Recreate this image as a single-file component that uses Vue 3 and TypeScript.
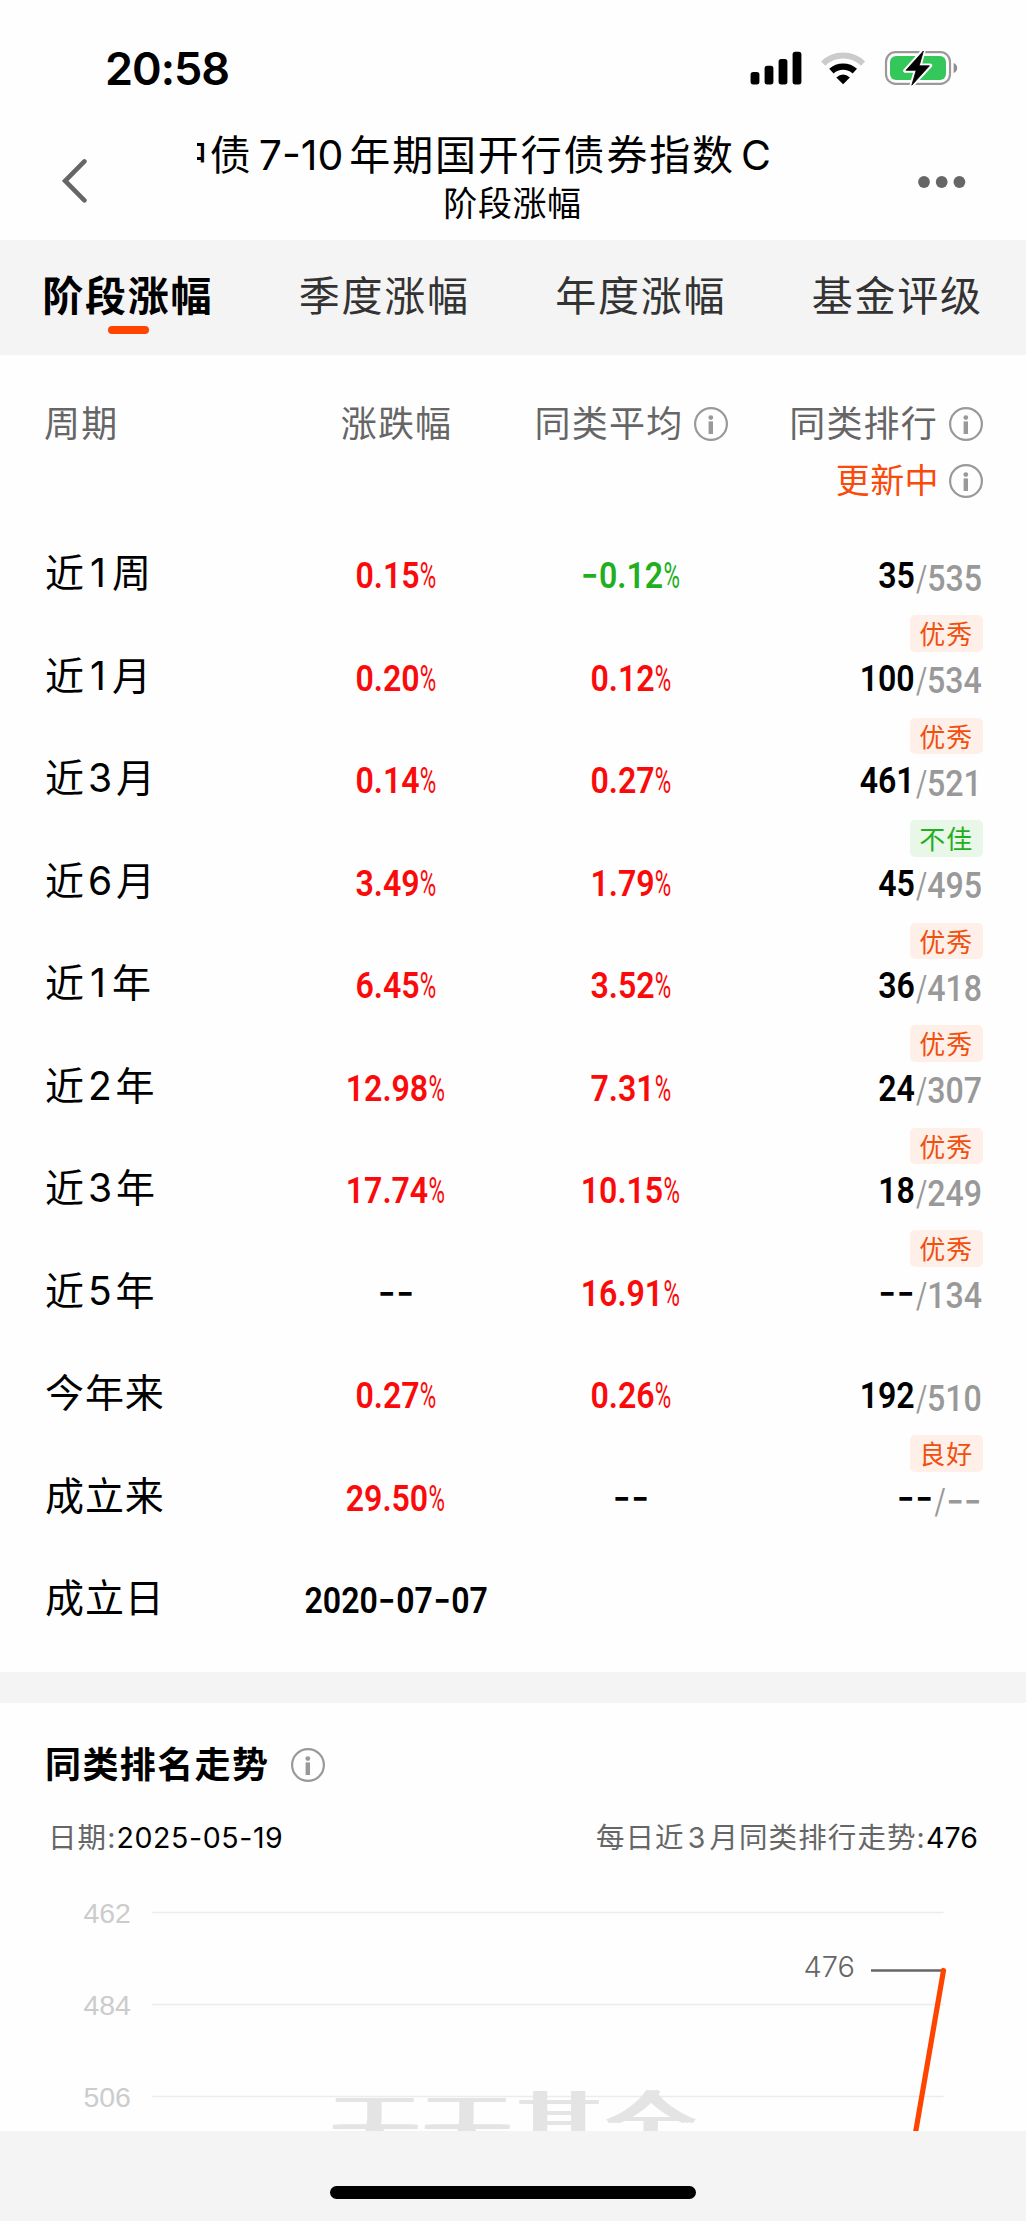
<script setup lang="ts">
import { h, type FunctionalComponent } from 'vue'

type Tone = 'up' | 'down' | 'flat'

interface Figure {
  text: string
  tone: Tone
}

interface Period {
  label: string
  change: Figure
  average?: Figure
  rank?: string
  total?: string
  badge?: string
  badgeTone?: 'good' | 'bad'
}

interface Run {
  kind: 'digits' | 'dash' | 'pct'
  text: string
}

const fig = (text: string): Figure => {
  if (text.includes('--') || !text.endsWith('%')) return { text, tone: 'flat' }
  return { text, tone: text.startsWith('-') ? 'down' : 'up' }
}

// Splits a figure into runs so that dashes and percent signs get their own proportions.
const runs = (text: string): Run[] =>
  (text.match(/-|%|[^-%]+/g) ?? []).map((part) => ({
    kind: part === '-' ? 'dash' : part === '%' ? 'pct' : 'digits',
    text: part,
  }))

// Splits a label at its Latin digits, which stand slightly apart from the Han characters.
const pieces = (text: string) =>
  (text.match(/\d+|\D+/g) ?? []).map((part) => ({ text: part, latin: /\d/.test(part) }))

const tabs = ['阶段涨幅', '季度涨幅', '年度涨幅', '基金评级']
const activeTab = '阶段涨幅'

const periods: Period[] = [
  { label: '近1周', change: fig('0.15%'), average: fig('-0.12%'), rank: '35', total: '535', badge: '优秀', badgeTone: 'good' },
  { label: '近1月', change: fig('0.20%'), average: fig('0.12%'), rank: '100', total: '534', badge: '优秀', badgeTone: 'good' },
  { label: '近3月', change: fig('0.14%'), average: fig('0.27%'), rank: '461', total: '521', badge: '不佳', badgeTone: 'bad' },
  { label: '近6月', change: fig('3.49%'), average: fig('1.79%'), rank: '45', total: '495', badge: '优秀', badgeTone: 'good' },
  { label: '近1年', change: fig('6.45%'), average: fig('3.52%'), rank: '36', total: '418', badge: '优秀', badgeTone: 'good' },
  { label: '近2年', change: fig('12.98%'), average: fig('7.31%'), rank: '24', total: '307', badge: '优秀', badgeTone: 'good' },
  { label: '近3年', change: fig('17.74%'), average: fig('10.15%'), rank: '18', total: '249', badge: '优秀', badgeTone: 'good' },
  { label: '近5年', change: fig('--'), average: fig('16.91%'), rank: '--', total: '134' },
  { label: '今年来', change: fig('0.27%'), average: fig('0.26%'), rank: '192', total: '510', badge: '良好', badgeTone: 'good' },
  { label: '成立来', change: fig('29.50%'), average: fig('--'), rank: '--', total: '--' },
  { label: '成立日', change: fig('2020-07-07') },
]

const gridLines = [
  { label: '462', y: 42.5 },
  { label: '484', y: 134.5 },
  { label: '506', y: 226.5 },
]

const InfoIcon: FunctionalComponent = () =>
  h('svg', { width: 34, height: 34, viewBox: '0 0 34 34', fill: '#999' }, [
    h('circle', { cx: 17, cy: 17, r: 15.9, fill: 'none', stroke: '#999', 'stroke-width': 2.2 }),
    h('circle', { cx: 16.8, cy: 10.6, r: 2.4 }),
    h('rect', { x: 14.6, y: 14.4, width: 4.4, height: 12.6 }),
  ])
</script>

<template>
  <main class="screen">
    <header class="status">
      <span class="clock">20:58</span>
      <svg class="status-icons" width="210" height="40" viewBox="0 0 210 40">
        <g fill="#000">
          <rect x="0.6" y="24" width="8.8" height="12.4" rx="2.6" />
          <rect x="14.6" y="17.8" width="8.8" height="18.6" rx="2.6" />
          <rect x="28.6" y="11" width="8.8" height="25.4" rx="2.6" />
          <rect x="42.6" y="3.8" width="8.8" height="32.6" rx="2.6" />
        </g>
        <path d="M73.2 15.6 A28.5 28.5 0 0 1 113 15.6" fill="none" stroke="#cbcbcb" stroke-width="6" />
        <path d="M81.4 23.2 A17.2 17.2 0 0 1 104.8 23.2" fill="none" stroke="#000" stroke-width="6.4" />
        <path d="M93.1 36.2 L86.3 29.4 Q93.1 23.4 99.9 29.4 Z" fill="#000" />
        <rect x="136" y="4.2" width="64" height="31.6" rx="9.6" fill="#fff" stroke="#9a9a9a" stroke-width="2.2" />
        <rect x="140" y="8" width="56" height="24" rx="6" fill="#34c759" />
        <path d="M203.6 15 Q207.2 16.4 207.2 20 Q207.2 23.6 203.6 25 Z" fill="#8e8e8e" />
        <path d="M173.4 2.6 L155.4 22.6 L166 22.6 L161.6 37.6 L180 17.6 L169.4 17.6 Z" fill="#000" stroke="#fff" stroke-width="4.4" stroke-linejoin="round" />
        <path d="M173.4 3 L156 22.3 L166.2 22.3 L161.8 37.2 L179.4 17.8 L169.2 17.8 Z" fill="#000" stroke="#000" stroke-width="0.8" stroke-linejoin="round" />
      </svg>
    </header>

    <nav class="navbar">
      <svg class="back" width="26" height="48" viewBox="0 0 26 48">
        <path d="M22.4 4.4 L3.2 23.9 L22.4 43.4" fill="none" stroke="#666" stroke-width="4.6" stroke-linecap="round" stroke-linejoin="miter" />
      </svg>
      <div class="titles">
        <div class="marquee"><span class="fund">中债<span class="wide">7-10</span>年期国开行债券指数<span class="last">C</span></span></div>
        <div class="subtitle">阶段涨幅</div>
      </div>
      <svg class="more" width="50" height="14" viewBox="0 0 50 14" fill="#666">
        <circle cx="7" cy="7" r="5.9" />
        <circle cx="24.7" cy="7" r="5.9" />
        <circle cx="42.4" cy="7" r="5.9" />
      </svg>
    </nav>

    <div class="tabs">
      <div v-for="tab in tabs" :key="tab" class="tab" :class="{ active: tab === activeTab }">
        <span>{{ tab }}</span>
      </div>
    </div>

    <section class="table">
      <div class="head">
        <div class="left">周期</div>
        <div class="center">涨跌幅</div>
        <div class="center with-icon">同类平均<InfoIcon /></div>
        <div class="right">
          <div class="with-icon">同类排行<InfoIcon /></div>
          <div class="with-icon updating">更新中<InfoIcon /></div>
        </div>
      </div>
      <div v-for="row in periods" :key="row.label" class="row">
        <div class="label"><span v-for="(p, i) in pieces(row.label)" :key="i" :class="{ latin: p.latin }">{{ p.text }}</span></div>
        <div class="value" :class="row.change.tone">
          <span class="num"><span v-for="(r, i) in runs(row.change.text)" :key="i" :class="r.kind">{{ r.text }}</span></span>
        </div>
        <div v-if="row.average" class="value" :class="row.average.tone">
          <span class="num"><span v-for="(r, i) in runs(row.average.text)" :key="i" :class="r.kind">{{ r.text }}</span></span>
        </div>
        <div v-if="row.rank && row.total" class="standing">
          <div class="rank"><span class="num"><span v-for="(r, i) in runs(row.rank)" :key="i" :class="r.kind">{{ r.text }}</span><span class="total"><span class="slash">/</span><span v-for="(r, i) in runs(row.total)" :key="i" :class="r.kind">{{ r.text }}</span></span></span></div>
          <span v-if="row.badge" class="badge" :class="row.badgeTone">{{ row.badge }}</span>
        </div>
      </div>
    </section>

    <section class="trend">
      <h2>同类排名走势<InfoIcon /></h2>
      <div class="legend">
        <div>日期:<b class="date">2025-05-19</b></div>
        <div>每日近<span class="latin">3</span>月同类排行走势:<b>476</b></div>
      </div>
      <div class="chart">
        <svg width="1026" height="261" viewBox="0 0 1026 261">
          <g v-for="line in gridLines" :key="line.label">
            <text class="tick" x="83.4" :y="line.y + 10.4">{{ line.label }}</text>
            <line x1="151.7" x2="943.5" :y1="line.y" :y2="line.y" stroke="#ececec" stroke-width="1.4" />
          </g>
          <text class="point" x="803.4" y="107">476</text>
          <line x1="871" x2="943" y1="100.5" y2="100.5" stroke="#666" stroke-width="2.7" />
          <path d="M943.5 100.5 L914.6 268" fill="none" stroke="#ff4400" stroke-width="5.2" stroke-linecap="round" />
        </svg>
        <div class="watermark">天天基金</div>
      </div>
    </section>

    <footer class="home"><div class="bar"></div></footer>
  </main>
</template>

<style>
body {
  margin: 0;
  background: #fff;
}
</style>

<style scoped>
.screen {
  width: 1026px;
  height: 2221px;
  overflow: hidden;
  display: flex;
  flex-direction: column;
  background: #fefefe;
  color: #000;
  font-family: 'Inter', 'Noto Sans CJK SC', sans-serif;
}
.status {
  display: flex;
  justify-content: space-between;
  height: 120px;
  padding: 48px 66px 0 105px;
  box-sizing: border-box;
  flex: none;
}
.clock {
  font-weight: 600;
  font-size: 45px;
  line-height: 42px;
  letter-spacing: -1px;
}
.navbar {
  flex: none;
  height: 120px;
  display: flex;
  align-items: flex-start;
  justify-content: space-between;
  padding: 0 59px 0 62px;
  box-sizing: border-box;
}
.back {
  margin-top: 37px;
}
.more {
  margin-top: 55px;
}
.titles {
  width: 632px;
  margin-left: 52px;
  margin-right: 31px;
}
.marquee {
  overflow: hidden;
  white-space: nowrap;
  height: 63px;
  line-height: 70px;
}
.fund {
  display: inline-block;
  margin-left: -30px;
  font-size: 41px;
  letter-spacing: 1.85px;
}
.fund .wide {
  margin: 0 6px 0 6px;
  letter-spacing: 0;
}
.fund .last {
  margin-left: 6px;
}
.subtitle {
  height: 40px;
  line-height: 41px;
  text-align: center;
  font-size: 34px;
  letter-spacing: 0.6px;
  padding-right: 1px;
}
.tabs {
  flex: none;
  height: 115px;
  background: #f4f4f4;
  display: grid;
  grid-template-columns: repeat(4, 1fr);
}
.tab {
  display: flex;
  flex-direction: column;
  align-items: center;
  font-size: 41px;
  letter-spacing: 1.8px;
  padding: 18px 1px 0 0;
  color: #333;
}
.tab span {
  height: 68px;
  line-height: 76px;
}
.tab.active {
  color: #000;
  font-weight: 700;
}
.tab.active::after {
  content: '';
  width: 41px;
  height: 8px;
  border-radius: 4px;
  background: #ff4400;
  margin-left: 2px;
}
.table {
  flex: none;
  height: 1317px;
  padding: 0 43px 0 44px;
  box-sizing: border-box;
}
.head,
.row {
  display: grid;
  grid-template-columns: 234px 235px 235px 235px;
}
.head {
  height: 185px;
  padding-top: 40px;
  box-sizing: border-box;
  font-size: 36px;
  line-height: 58px;
  letter-spacing: 1.2px;
  color: #666;
}
.center {
  text-align: center;
  padding-left: 2px;
}
.with-icon {
  display: flex;
  justify-content: center;
  align-items: center;
  gap: 11px;
  height: 58px;
}
.right .with-icon {
  justify-content: flex-end;
}
.right .with-icon.updating {
  height: 56px;
  font-size: 34px;
  letter-spacing: 0.4px;
  gap: 10px;
  color: #fa4a0c;
}
.row {
  height: 102.55px;
}
.label {
  padding-left: 1px;
  font-size: 39px;
  letter-spacing: 0.9px;
  line-height: 65px;
}
.label .latin {
  display: inline-block;
  min-width: 21px;
  text-align: center;
  margin: 0 3px;
}
.value {
  text-align: center;
  line-height: 72px;
}
.num {
  display: inline-block;
  font-family: 'Roboto', sans-serif;
  font-weight: 600;
  font-size: 36.5px;
  white-space: nowrap;
  transform: scaleX(0.88);
}
.dash {
  display: inline-block;
  width: 20.8px;
  font-family: 'Inter', sans-serif;
  line-height: 1;
  text-align: center;
  transform: translateY(-1px) scaleX(1.2);
}
.pct {
  display: inline-block;
  width: 17.6px;
  text-align: left;
  font-weight: 400;
  transform: scaleX(0.7);
  transform-origin: left;
}
.value .num {
  margin-left: -1px;
}
.up {
  color: #fa0a0a;
}
.down {
  color: #1faf1f;
}
.flat {
  color: #000;
}
.value.flat .num {
  margin-left: 1px;
}
.standing {
  display: flex;
  flex-direction: column;
  align-items: flex-end;
}
.rank {
  height: 75px;
  line-height: 72px;
  padding-right: 1px;
}
.rank .num {
  transform-origin: right;
}
.total {
  display: inline-block;
  position: relative;
  top: 2.6px;
  color: #999;
  font-weight: 500;
}
.slash {
  display: inline-block;
  font-weight: 400;
  transform: scaleX(0.85);
  margin: 0 -1.6px 0 0.6px;
}
.badge {
  width: 73.5px;
  height: 36.5px;
  border-radius: 5px;
  text-align: center;
  font-size: 26px;
  line-height: 39px;
  letter-spacing: 1px;
}
.badge.good {
  color: #f0500f;
  background: #ffefe9;
}
.badge.bad {
  color: #1faf1f;
  background: #e8f7e8;
}
.trend {
  flex: none;
  height: 459px;
  border-top: 31px solid #f4f4f4;
  box-sizing: border-box;
}
h2 {
  margin: 0;
  padding: 30px 0 0 45px;
  box-sizing: border-box;
  display: flex;
  align-items: center;
  height: 93px;
  font-size: 36px;
  letter-spacing: 1.4px;
  line-height: 58px;
}
h2 svg {
  margin-left: 22px;
}
.legend {
  display: flex;
  justify-content: space-between;
  padding: 17px 48px 0 48px;
  height: 74px;
  box-sizing: border-box;
  font-size: 28.5px;
  line-height: 50px;
  letter-spacing: 1.1px;
  color: #666;
}
.legend b {
  font-weight: 400;
  letter-spacing: 0.1px;
  color: #000;
}
.legend .date {
  letter-spacing: 0.6px;
}
.legend .latin {
  margin: 0 3px;
}
.chart {
  position: relative;
  height: 261px;
  overflow: hidden;
}
.chart svg {
  display: block;
}
.tick {
  font-family: 'Liberation Sans', sans-serif;
  font-size: 28.5px;
  fill: #ccc;
}
.point {
  font-size: 29px;
  font-weight: 300;
  fill: #666;
}
.watermark {
  position: absolute;
  left: 332px;
  top: 207px;
  font-size: 86px;
  line-height: 110px;
  letter-spacing: 6px;
  font-weight: 300;
  color: #e4e4e4;
  text-shadow: -5px 0 #e4e4e4, -3px 0 #e4e4e4, 3px 0 #e4e4e4, 5px 0 #e4e4e4;
  white-space: nowrap;
}
.home {
  flex: none;
  height: 90px;
  background: #f4f4f4;
  display: flex;
  justify-content: center;
  padding-top: 55px;
  box-sizing: border-box;
}
.bar {
  width: 366px;
  height: 13px;
  border-radius: 7px;
  background: #000;
}
</style>
